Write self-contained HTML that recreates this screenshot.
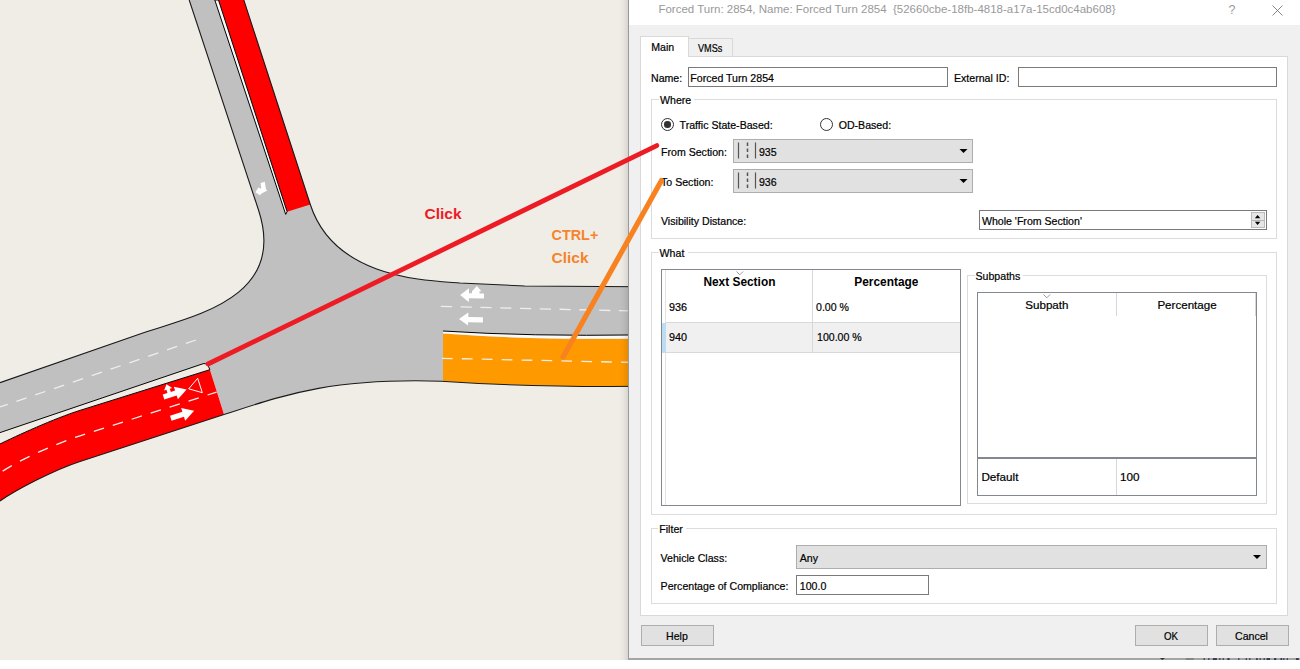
<!DOCTYPE html>
<html><head><meta charset="utf-8">
<style>
html,body{margin:0;padding:0;}
body{width:1300px;height:669px;position:relative;overflow:hidden;background:#ffffff;font-family:"Liberation Sans",sans-serif;}
.abs{position:absolute;box-sizing:border-box;}
.t{position:absolute;line-height:1;white-space:nowrap;font-size:10.6px;color:#000;-webkit-text-stroke:0.2px #000;}
svg.full{position:absolute;left:0;top:0;}
</style></head>
<body>
<svg class="full" width="1300" height="669" viewBox="0 0 1300 669">
  <rect x="0" y="0" width="640" height="660" fill="#f0ede7"/>
  <!-- gray junction -->
  <path d="M189.2,0 L258.5,210 C288.1,299.7 190.4,316.4 140,334 L0,382.7 L0,432.6 L203.1,363.7 L209.9,369.7 L224,414.6 C283.9,395.1 329.5,377.9 441.2,381.2 Q530,387.3 640,386.3 L640,286.8 L524.6,286 L460,283 C427.7,280.4 334.7,279.5 310.3,204.5 L243.8,0 Z" fill="#c0c0c0"/>
  <!-- red north section -->
  <path d="M218.5,0 L287.1,211.7 L310.3,204.5 L243.8,0 Z" fill="#ff0000"/>
  <!-- north separator strip -->
  <path d="M214.8,0 L285.7,214.4 L287.1,211.7 L218.5,0 Z" fill="#fafafa" stroke="#000" stroke-width="1"/>
  <!-- SW red section -->
  <path d="M209.9,369.7 L80,410.4 C55,418.2 15,436.5 0,444 L0,501 C15,490.5 53,470.2 80,461.4 L224,414.6 Z" fill="#ff0000"/>
  <!-- SW gap wedge -->
  <path d="M0,432.6 L203.1,363.7 Q207.5,362.4 209.9,369.7 L80,410.4 C55,418.2 15,436.5 0,444 Z" fill="#f0ede7"/>
  <path d="M0,432.6 L203.1,363.7 Q207.5,362.4 209.9,369.7 L80,410.4 C55,418.2 15,436.5 0,444" fill="none" stroke="#000" stroke-width="1"/>
  <!-- orange east -->
  <path d="M443,333.6 Q530,340 640,338.4 L640,386.3 Q530,387.3 443,381 Z" fill="#ff9900"/>
  <!-- east separator -->
  <path d="M443,331 Q530,336.6 640,334.9 L640,338.4 Q530,340 443,333.6 Z" fill="#fafafa"/>
  <path d="M443,331 Q530,336.6 640,334.9" fill="none" stroke="#000" stroke-width="1"/>
  <!-- outlines -->
  <g fill="none" stroke="#1a1a1a" stroke-width="1.1">
    <path d="M189.2,0 L258.5,210 C288.1,299.7 190.4,316.4 140,334 L0,382.7"/>
    <path d="M243.8,0 L310.3,204.5 C334.7,279.5 427.7,280.4 460,283 L524.6,286 L640,286.8"/>
    <path d="M0,501 C15,490.5 53,470.2 80,461.4 L224,414.6 C283.9,395.1 329.5,377.9 441.2,381.2 Q530,387.3 640,386.3"/>
  </g>
  <!-- dashes -->
  <g fill="none" stroke="#eeeeee" stroke-width="1.3" stroke-dasharray="10.7 9.2">
    <path d="M196,340 L0,407"/>
    <path d="M216.6,392.1 L80,435.8 C55,443.8 15,462 0,473" stroke-dashoffset="1.2"/>
    <path d="M440.8,306.4 L640,311.2" stroke-dasharray="11.2 8.6"/>
    <path d="M442,358.3 L640,362.6"/>
  </g>

  <!-- arrows -->
  <g fill="#fff">
    <polygon points="260.6,183 264.8,181.8 266,189.6 267.4,190.4 262,193.2 259.9,195.3 255.4,192.3 258.4,187.6 261.2,188.8"/>
    <g transform="translate(170.8,418.3) rotate(-17.7)"><polygon points="0,-2.6 13,-2.6 13,-6.6 24.5,0 13,6.6 13,2.6 0,2.6"/></g>
    <g transform="translate(163.5,397) rotate(-17.7)"><polygon points="0,-2.6 5,-2.6 5,-6 2.5,-6 6.75,-11.2 11,-6 8.5,-6 8.5,-2.6 13,-2.6 13,-6.6 24.3,0 13,6.6 13,2.6 0,2.6"/></g>
    <polygon points="460.1,295 469,288.2 469,293.2 472,293.2 472,291.2 476.9,286 481.4,291.2 479.5,291.2 479.5,293.4 484,293.6 484,298.4 469,298.3 468.7,302"/>
    <polygon points="459,318.9 468.3,312.5 468.3,317 482.9,317.3 482.9,322.4 468.1,322.2 468,325.6"/>
  </g>
  <polygon points="197.7,378.3 202.3,392.7 188.7,388.8" fill="none" stroke="#fff" stroke-width="1"/>
  <!-- annotation lines -->
  <text x="424.5" y="218.8" font-family="Liberation Sans" font-weight="bold" font-size="15.5" fill="#ed1c24">Click</text>
  <text x="551.5" y="239.6" font-family="Liberation Sans" font-weight="bold" font-size="15.5" fill="#f5842c" textLength="46.8" lengthAdjust="spacingAndGlyphs">CTRL+</text>
  <text x="551.5" y="262.7" font-family="Liberation Sans" font-weight="bold" font-size="15.5" fill="#f5842c">Click</text>
</svg>
<div class="abs" style="left:619px;top:0;width:9px;height:660px;background:linear-gradient(to right,rgba(0,0,0,0),rgba(0,0,0,0.03) 50%,rgba(0,0,0,0.10));"></div>
<div class="abs" style="left:628px;top:0;width:672px;height:660px;background:#f0f0f0;border-left:1px solid #999;border-bottom:2px solid #a5a5a5;"></div>
<div class="abs" style="left:629px;top:0;width:671px;height:25px;background:#fff;"></div>
<div class="t" style="left:658.4px;top:4px;font-size:11.5px;color:#999;-webkit-text-stroke:0;">Forced Turn: 2854, Name: Forced Turn 2854&nbsp; {52660cbe-18fb-4818-a17a-15cd0c4ab608}</div>
<div class="t" style="left:1228.5px;top:4px;font-size:12.5px;color:#9a9a9a;-webkit-text-stroke:0;">?</div>
<svg class="abs" style="left:1271px;top:4px" width="13" height="13"><path d="M1.5,1.5 L11.5,11.5 M11.5,1.5 L1.5,11.5" stroke="#777" stroke-width="0.9" fill="none"/></svg>
<!-- tabs -->
<div class="abs" style="left:688px;top:38px;width:45px;height:19px;background:#f0f0f0;border:1px solid #d9d9d9;border-bottom:none;"></div>
<div class="abs" style="left:640px;top:56px;width:648px;height:560px;background:#fff;border:1px solid #d9d9d9;"></div>
<div class="abs" style="left:640px;top:36px;width:49px;height:21px;background:#fff;border:1px solid #d9d9d9;border-bottom:none;"></div>
<div class="t" style="left:651.3px;top:42px;">Main</div>
<div class="t" style="left:698px;top:42.7px;transform:scaleX(0.86);transform-origin:0 0;">VMSs</div>
<!-- name row -->
<div class="t" style="left:651px;top:72.5px;">Name:</div>
<div class="abs" style="left:688px;top:67px;width:260px;height:20px;border:1px solid #7a7a7a;background:#fff;"></div>
<div class="t" style="left:690.3px;top:72.5px;">Forced Turn 2854</div>
<div class="t" style="left:954px;top:72.5px;">External ID:</div>
<div class="abs" style="left:1018px;top:67px;width:259px;height:20px;border:1px solid #7a7a7a;background:#fff;"></div>
<!-- where group -->
<div class="abs" style="left:651px;top:99px;width:626px;height:140px;border:1px solid #dcdcdc;"></div>
<div class="abs" style="left:658.6px;top:94px;width:35.4px;height:10px;background:#fff;"></div>
<div class="t" style="left:660px;top:95px;">Where</div>
<div class="abs" style="left:661px;top:118px;width:13px;height:13px;border:1px solid #333;border-radius:50%;background:#fff;"></div>
<div class="abs" style="left:664.2px;top:121.2px;width:6.6px;height:6.6px;border-radius:50%;background:#333;"></div>
<div class="t" style="left:679.6px;top:120.2px;">Traffic State-Based:</div>
<div class="abs" style="left:820px;top:118px;width:13px;height:13px;border:1px solid #333;border-radius:50%;background:#fff;"></div>
<div class="t" style="left:838.7px;top:120.2px;">OD-Based:</div>
<div class="t" style="left:661px;top:146.6px;">From Section:</div>
<div class="abs" style="left:733px;top:139px;width:240px;height:24px;background:#e1e1e1;border:1px solid #adadad;"></div>
<svg class="abs" style="left:733px;top:139px" width="240" height="24"><g stroke="#555" stroke-width="1.2"><path d="M5.5,3.5 V19.5 M22.5,3.5 V19.5"/><path d="M14.5,3.5 V19.5" stroke-width="1.5" stroke-dasharray="3.5 2.5"/></g><path d="M226.5,10 L234.5,10 L230.5,14 Z" fill="#000"/></svg>
<div class="t" style="left:758.9px;top:146.6px;">935</div>
<div class="t" style="left:661px;top:176.5px;">To Section:</div>
<div class="abs" style="left:733px;top:169px;width:240px;height:24px;background:#e1e1e1;border:1px solid #adadad;"></div>
<svg class="abs" style="left:733px;top:169px" width="240" height="24"><g stroke="#555" stroke-width="1.2"><path d="M5.5,3.5 V19.5 M22.5,3.5 V19.5"/><path d="M14.5,3.5 V19.5" stroke-width="1.5" stroke-dasharray="3.5 2.5"/></g><path d="M226.5,10 L234.5,10 L230.5,14 Z" fill="#000"/></svg>
<div class="t" style="left:758.9px;top:176.5px;">936</div>
<div class="t" style="left:661px;top:216px;">Visibility Distance:</div>
<div class="abs" style="left:979px;top:210px;width:288px;height:20px;border:1px solid #7a7a7a;background:#fff;"></div>
<div class="t" style="left:981.9px;top:215.6px;">Whole 'From Section'</div>
<div class="abs" style="left:1251px;top:212px;width:14px;height:16px;background:#e6e6e6;border:1px solid #bbb;"></div>
<svg class="abs" style="left:1251px;top:212px" width="14" height="16"><path d="M1,8.5 H13" stroke="#b5b5b5" stroke-width="1"/><path d="M3.9,6.2 L9.3,6.2 L6.6,3 Z M3.9,9.8 L9.3,9.8 L6.6,13 Z" fill="#000"/></svg>
<!-- what group -->
<div class="abs" style="left:651px;top:252px;width:626px;height:263px;border:1px solid #dcdcdc;"></div>
<div class="abs" style="left:658.6px;top:247px;width:29.6px;height:10px;background:#fff;"></div>
<div class="t" style="left:659.6px;top:247.7px;">What</div>
<!-- next section table -->
<div class="abs" style="left:661px;top:269px;width:300px;height:237px;border:1px solid #828790;background:#fff;"></div>
<div class="abs" style="left:665px;top:270px;width:1px;height:235px;background:#e3e3e3;"></div>
<div class="abs" style="left:666px;top:293px;width:294px;height:30px;border-bottom:1px solid #d8d8d8;"></div>
<div class="abs" style="left:662px;top:323px;width:298px;height:30px;background:#f0f0f0;border-bottom:1px solid #d8d8d8;"></div>
<div class="abs" style="left:662px;top:323px;width:4px;height:29px;background:#bcdcf4;"></div>
<div class="abs" style="left:812px;top:270px;width:1px;height:82px;background:#d8d8d8;"></div>
<svg class="abs" style="left:736px;top:270.5px" width="9" height="6"><path d="M0.5,0.5 L3.8,3.8 L7.1,0.5" stroke="#999" fill="none"/></svg>
<div class="t" style="left:703.4px;top:277.2px;font-weight:bold;font-size:11.9px;-webkit-text-stroke:0;">Next Section</div>
<div class="t" style="left:854.3px;top:277.2px;font-weight:bold;font-size:11.9px;-webkit-text-stroke:0;">Percentage</div>
<div class="t" style="left:668.7px;top:302.2px;font-size:11.4px;transform:scaleX(0.95);transform-origin:0 0;">936</div>
<div class="t" style="left:816px;top:302.2px;font-size:11.4px;transform:scaleX(0.93);transform-origin:0 0;">0.00 %</div>
<div class="t" style="left:668.7px;top:332.2px;font-size:11.4px;transform:scaleX(0.95);transform-origin:0 0;">940</div>
<div class="t" style="left:816.5px;top:332.2px;font-size:11.4px;transform:scaleX(0.93);transform-origin:0 0;">100.00 %</div>
<!-- subpaths group -->
<div class="abs" style="left:967px;top:275px;width:300px;height:229px;border:1px solid #dcdcdc;"></div>
<div class="abs" style="left:974.6px;top:270px;width:48.4px;height:10px;background:#fff;"></div>
<div class="t" style="left:975.5px;top:271.2px;">Subpaths</div>
<div class="abs" style="left:977px;top:292px;width:280px;height:166px;border:1px solid #828790;background:#fff;"></div>
<div class="abs" style="left:1116px;top:293px;width:1px;height:23px;background:#d8d8d8;"></div>
<div class="abs" style="left:1255px;top:293px;width:1px;height:23px;background:#d8d8d8;"></div>
<svg class="abs" style="left:1043px;top:293.5px" width="9" height="6"><path d="M0.5,0.5 L3.8,3.8 L7.1,0.5" stroke="#999" fill="none"/></svg>
<div class="t" style="left:1025.3px;top:298.6px;font-size:11.6px;">Subpath</div>
<div class="t" style="left:1157.4px;top:298.6px;font-size:11.6px;">Percentage</div>
<div class="abs" style="left:977px;top:457px;width:280px;height:39px;border:1px solid #828790;border-top:2px solid #828790;background:#fff;"></div>
<div class="abs" style="left:1116px;top:459px;width:1px;height:36px;background:#d8d8d8;"></div>
<div class="t" style="left:981.4px;top:471px;font-size:11.7px;">Default</div>
<div class="t" style="left:1120px;top:471px;font-size:11.7px;">100</div>
<!-- filter group -->
<div class="abs" style="left:651px;top:528px;width:626px;height:76px;border:1px solid #dcdcdc;"></div>
<div class="abs" style="left:658.3px;top:523px;width:27.7px;height:10px;background:#fff;"></div>
<div class="t" style="left:659.3px;top:523.8px;">Filter</div>
<div class="t" style="left:660.6px;top:553.3px;">Vehicle Class:</div>
<div class="abs" style="left:796px;top:545px;width:471px;height:24px;background:#e1e1e1;border:1px solid #adadad;"></div>
<svg class="abs" style="left:1240px;top:545px" width="27" height="24"><path d="M13,10 L21,10 L17,14 Z" fill="#000"/></svg>
<div class="t" style="left:799.8px;top:553.3px;">Any</div>
<div class="t" style="left:660.6px;top:581.3px;">Percentage of Compliance:</div>
<div class="abs" style="left:796px;top:575px;width:133px;height:20px;border:1px solid #7a7a7a;background:#fff;"></div>
<div class="t" style="left:799.8px;top:581.3px;">100.0</div>
<!-- buttons -->
<div class="abs" style="left:641px;top:625px;width:73px;height:21px;background:#e1e1e1;border:1px solid #adadad;"></div>
<div class="t" style="left:666px;top:631px;">Help</div>
<div class="abs" style="left:1135px;top:625px;width:73px;height:21px;background:#e1e1e1;border:1px solid #adadad;"></div>
<div class="t" style="left:1163.6px;top:631px;transform:scaleX(0.92);transform-origin:0 0;">OK</div>
<div class="abs" style="left:1216px;top:625px;width:73px;height:21px;background:#e1e1e1;border:1px solid #adadad;"></div>
<div class="t" style="left:1235px;top:631px;">Cancel</div>
<svg class="abs" style="left:0;top:0" width="1300" height="669"><g fill="#1a1a40"><rect x="1203.6" y="658.3" width="1.2" height="1.5"/><rect x="1208.2" y="658.3" width="1.2" height="1.5"/><rect x="1212.9" y="658.3" width="4.0" height="1.5"/><rect x="1219.2" y="658.3" width="1.2" height="1.5"/><rect x="1222.7" y="658.3" width="1.1" height="1.5"/><rect x="1227.3" y="658.3" width="2.3" height="1.5"/><rect x="1238.2" y="658.3" width="1.2" height="1.5"/><rect x="1245.7" y="658.3" width="1.2" height="1.5"/><rect x="1249.2" y="658.3" width="1.2" height="1.5"/><rect x="1256.1" y="658.3" width="1.7" height="1.5"/><rect x="1259.6" y="658.3" width="1.1" height="1.5"/><rect x="1263.6" y="658.3" width="1.2" height="1.5"/><rect x="1266.5" y="658.3" width="3.5" height="1.5"/><rect x="1274.0" y="658.3" width="2.3" height="1.5"/><rect x="1280.4" y="658.3" width="1.8" height="1.5"/><rect x="1283.2" y="658.3" width="1.2" height="1.5"/><rect x="1286.7" y="658.3" width="1.2" height="1.5"/><rect x="1295.9" y="658.3" width="2.9" height="1.5"/></g><path d="M1159.8,658 L1165,658 L1162.4,660 Z" fill="#333"/><rect x="1185.8" y="658.3" width="8" height="1.4" fill="#777"/></svg>
<svg class="full" width="1300" height="669" viewBox="0 0 1300 669">
  <line x1="208" y1="364" x2="656.8" y2="145.6" stroke="#ed1c24" stroke-width="4.8" stroke-linecap="round"/>
  <line x1="563" y1="357" x2="661.5" y2="180.4" stroke="#f8821f" stroke-width="5.2" stroke-linecap="round"/>
</svg>
</body></html>
